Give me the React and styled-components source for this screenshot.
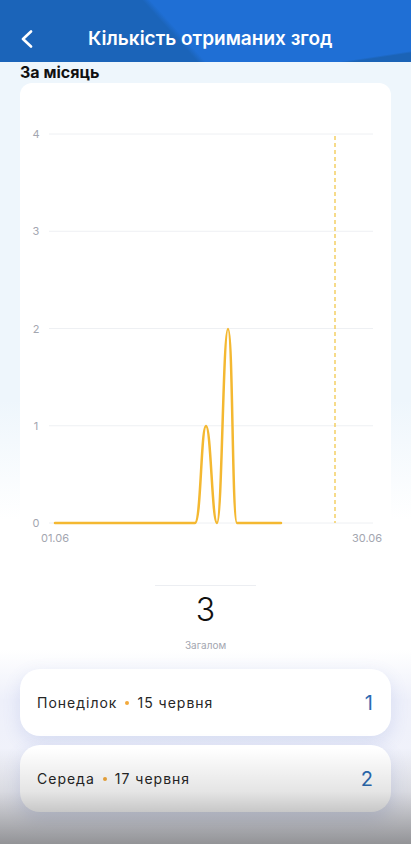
import React from 'react';
import styled, { createGlobalStyle } from 'styled-components';

const GlobalStyle = createGlobalStyle`
  html, body {
    margin: 0;
    padding: 0;
  }
  body {
    font-family: "Inter", "Noto Sans", sans-serif;
    color: #111;
  }
  * { box-sizing: border-box; }
`;

const Page = styled.div`
  position: relative;
  width: 411px;
  min-height: 844px;
  overflow: hidden;
  background: linear-gradient(180deg, #eef6fc 0px, #eef6fc 400px, #ffffff 520px, #ffffff 650px, #eef0fa 700px, #f4f5fb 844px);
`;

const Header = styled.header`
  height: 62px;
  padding: 16px 0 0 20px;
  display: flex;
  align-items: center;
  gap: 54px;
  background:
    linear-gradient(to top left, #1b63b6 0, #1b63b6 9px, transparent 11px),
    linear-gradient(48deg, #1b64b9 0, #1b64b9 147px, #1f6fd5 153px, #1f6fd5 100%);
`;

const BackButton = styled.button`
  width: 14px;
  height: 24px;
  padding: 0;
  border: none;
  background: none;
  display: flex;
  align-items: center;
  cursor: pointer;
`;

const Title = styled.h1`
  margin: 0;
  font-size: 19px;
  line-height: 24px;
  font-weight: 600;
  color: #fff;
  white-space: nowrap;
`;

const Content = styled.main`
  padding: 0 20px;
`;

const SectionTitle = styled.h2`
  margin: 0;
  font-size: 16px;
  line-height: 20px;
  font-weight: 700;
  color: #111;
`;

const ChartCard = styled.div`
  margin-top: 1px;
  height: 473px;
  background: #fff;
  border-radius: 12px;
`;

const Summary = styled.div`
  margin-top: 29px;
  display: flex;
  flex-direction: column;
  align-items: center;
`;

const Divider = styled.div`
  width: 101px;
  height: 1px;
  background: #eceef2;
`;

const Total = styled.div`
  margin-top: 6px;
  font-size: 32px;
  line-height: 36px;
  font-weight: 300;
  color: #111;
`;

const TotalLabel = styled.div`
  margin-top: 10px;
  font-size: 10px;
  line-height: 14px;
  color: #a3a6b0;
`;

const List = styled.div`
  margin-top: 17px;
  display: flex;
  flex-direction: column;
  gap: 9px;
`;

const DayCard = styled.div`
  height: 67px;
  padding: 0 18px 0 17px;
  display: flex;
  align-items: center;
  justify-content: space-between;
  background: #fff;
  border-radius: 20px;
  box-shadow: 0 6px 18px rgba(90, 110, 200, 0.16);
`;

const DayText = styled.span`
  font-size: 14px;
  letter-spacing: 1px;
  color: #262626;
  display: flex;
  align-items: center;
`;

const Dot = styled.span`
  width: 4px;
  height: 4px;
  border-radius: 50%;
  background: #f2a93b;
  margin: 0 8px;
`;

const Count = styled.span`
  font-size: 20px;
  font-weight: 400;
  color: #2c6bb2;
`;

const BottomFade = styled.div`
  position: absolute;
  left: 0;
  right: 0;
  bottom: 0;
  height: 96px;
  pointer-events: none;
  background: linear-gradient(180deg, rgba(0, 0, 0, 0) 0%, rgba(0, 0, 0, 0.1) 45%, rgba(0, 0, 0, 0.4) 100%);
`;

const yTicks = [4, 3, 2, 1, 0];
const STEP = 97.25;
const BASE = 440;

const Chart = () => (
  <svg width="371" height="473" viewBox="0 0 371 473">
    {yTicks.map((v) => (
      <g key={v}>
        <line x1="29" x2="353" y1={BASE - v * STEP} y2={BASE - v * STEP} stroke="#eef0f3" strokeWidth="1" />
        <text x="16" y={BASE - v * STEP + 4} textAnchor="middle" fontSize="11" fill="#a3a6b0" fontFamily="Inter, sans-serif">
          {v}
        </text>
      </g>
    ))}
    <line x1="315" x2="315" y1="53" y2={BASE} stroke="#f3cc5a" strokeWidth="1.4" strokeDasharray="4 3" />
    <path
      d="M35 440 L175 440 C181 440 181 343 186 343 C191 343 192 440 197 440 C202 440 203 246 208 246 C213 246 212 440 217 440 L261 440"
      fill="none"
      stroke="#f4b831"
      strokeWidth="2.5"
      strokeLinecap="round"
      strokeLinejoin="round"
    />
    <text x="35" y="459" textAnchor="middle" fontSize="11" fill="#a3a6b0" fontFamily="Inter, sans-serif">01.06</text>
    <text x="347" y="459" textAnchor="middle" fontSize="11" fill="#a3a6b0" fontFamily="Inter, sans-serif">30.06</text>
  </svg>
);

const days = [
  { name: 'Понеділок', date: '15 червня', count: 1 },
  { name: 'Середа', date: '17 червня', count: 2 },
];

const App = () => (
  <Page>
    <GlobalStyle />
    <Header>
      <BackButton aria-label="Назад">
        <svg width="14" height="18" viewBox="0 0 14 18">
          <polyline points="11,1.5 3,9 11,16.5" fill="none" stroke="#fff" strokeWidth="2.6" strokeLinecap="round" strokeLinejoin="round" />
        </svg>
      </BackButton>
      <Title>Кількість отриманих згод</Title>
    </Header>
    <Content>
      <SectionTitle>За місяць</SectionTitle>
      <ChartCard>
        <Chart />
      </ChartCard>
      <Summary>
        <Divider />
        <Total>3</Total>
        <TotalLabel>Загалом</TotalLabel>
      </Summary>
      <List>
        {days.map((d) => (
          <DayCard key={d.date}>
            <DayText>
              {d.name}
              <Dot />
              {d.date}
            </DayText>
            <Count>{d.count}</Count>
          </DayCard>
        ))}
      </List>
    </Content>
    <BottomFade />
  </Page>
);

export default App;
